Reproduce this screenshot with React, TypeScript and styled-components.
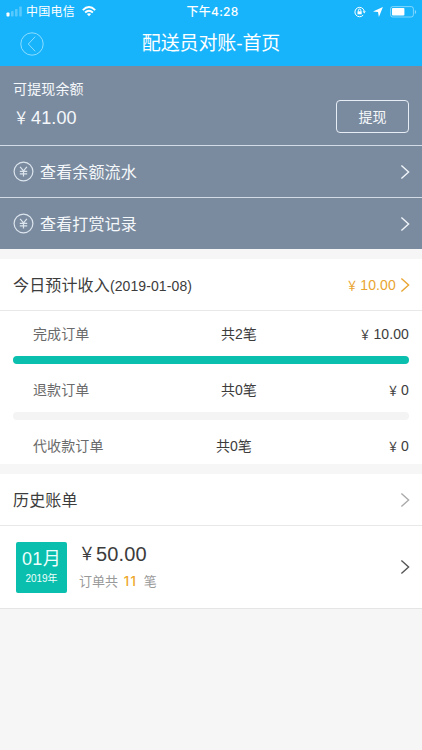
import React from 'react';
import styled, { createGlobalStyle } from 'styled-components';

const GlobalStyle = createGlobalStyle`
  * { box-sizing: border-box; }
  body {
    margin: 0;
    background: #f6f6f6;
    font-family: "Liberation Sans", "Noto Sans CJK SC", sans-serif;
    color: #3c3c3c;
  }
`;

const Page = styled.main`
  width: 422px;
  height: 750px;
  overflow: hidden;
  background: #f6f6f6;
`;

const Header = styled.header`
  height: 66px;
  background: #18b4fb;
  color: #fff;
`;

const StatusBar = styled.div`
  display: grid;
  grid-template-columns: 1fr auto 1fr;
  align-items: center;
  height: 22px;
  padding: 0 5px 0 6px;
  font-size: 12px;
  line-height: 22px;
`;

const StatusGroup = styled.div<{ $end?: boolean }>`
  display: flex;
  align-items: center;
  justify-content: ${(p) => (p.$end ? 'flex-end' : 'flex-start')};
`;

const Carrier = styled.span`
  margin: 0 7px 0 3px;
  padding-top: 1px;
  letter-spacing: 0.25px;
`;

const Clock = styled.span`
  margin-left: 2px;
  padding-top: 1px;
  font-family: Inter, "Noto Sans CJK SC", sans-serif;
  font-weight: 500;
  font-size: 12px;
  letter-spacing: 0.25px;
`;

const TitleBar = styled.div`
  display: grid;
  grid-template-columns: 24px 1fr 24px;
  align-items: center;
  height: 43px;
  padding: 0 20px;
`;

const Title = styled.h1`
  margin: 0;
  font-size: 19px;
  font-weight: 400;
  line-height: 43px;
  letter-spacing: -0.1px;
  text-align: center;
`;

const Balance = styled.section`
  background: #7b8b9f;
  color: #f5f8fb;
`;

const BalanceTop = styled.div`
  display: flex;
  justify-content: space-between;
  height: 79px;
  padding: 12px 13px 0;
`;

const BalanceLabel = styled.div`
  font-size: 14px;
  line-height: 22px;
  letter-spacing: 0.15px;
`;

const BalanceAmount = styled.div`
  padding-top: 2px;
  font-size: 18px;
  line-height: 32px;
  letter-spacing: 0.1px;
`;

const WithdrawButton = styled.button`
  width: 73px;
  height: 33px;
  margin-top: 22px;
  padding: 0 0 2px;
  border: 1px solid #e6edf5;
  border-radius: 4px;
  background: transparent;
  color: inherit;
  font: 14px/28px "Noto Sans CJK SC", sans-serif;
`;

const LinkRow = styled.div`
  display: flex;
  align-items: center;
  height: 52px;
  padding: 0 12px 0 13px;
  border-top: 1px solid #d3dce6;
  font-size: 16px;
  letter-spacing: 0.15px;

  span { flex: 1; margin-left: 6px; padding-bottom: 2px; }
`;

const Panel = styled.section`
  margin-top: 10px;
  background: #fff;
`;

const PanelHead = styled.div`
  display: flex;
  align-items: center;
  height: 52px;
  padding: 0 12px 0 13px;
  border-bottom: 1px solid #e8e8e8;
`;

const PanelTitle = styled.h2`
  flex: 1;
  margin: 0;
  padding-bottom: 2px;
  font-size: 16px;
  font-weight: 400;
  letter-spacing: 0.15px;

  small { font-size: 14px; letter-spacing: 0.1px; }
`;

const Income = styled.span`
  margin-right: 4px;
  padding-bottom: 2px;
  color: #e9a531;
  font-size: 14px;
  letter-spacing: 0.15px;
`;

const YenSign = styled.span<{ $pull?: number }>`
  display: inline-block;
  margin-left: -1px;
  margin-right: ${(p) => 1 - (p.$pull || 0)}px;
  transform: scale(0.82, 0.92);
`;

const OrderItem = styled.div<{ $height: number }>`
  height: ${(p) => p.$height}px;
  padding: 0 13px;
`;

const OrderLine = styled.div<{ $lead: number }>`
  display: grid;
  grid-template-columns: ${(p) => p.$lead}px 1fr auto;
  height: 44px;
  padding-left: 20px;
  font-size: 14px;
  line-height: 47px;
`;

const OrderName = styled.span`
  color: #6a6a6a;
  letter-spacing: 0.1px;
`;

const OrderAmount = styled.span`
  letter-spacing: 0.1px;
`;

const Bar = styled.div<{ $filled?: boolean }>`
  height: 8px;
  margin-top: 1px;
  border-radius: 4px;
  background: ${(p) => (p.$filled ? '#0abfad' : '#f4f4f4')};
`;

const Bill = styled.div`
  display: flex;
  align-items: center;
  height: 83px;
  padding: 0 12px 0 16px;
  border-bottom: 1px solid #e5e5e5;
`;

const DateTile = styled.div`
  width: 51px;
  height: 51px;
  padding-top: 5px;
  border-radius: 2px;
  background: #0abfad;
  color: #effffd;
  text-align: center;
`;

const Month = styled.div`
  font-size: 18px;
  line-height: 24px;
  letter-spacing: 0.3px;
`;

const Year = styled.div`
  font-size: 10px;
  line-height: 15px;
`;

const BillInfo = styled.div`
  flex: 1;
  margin-left: 12px;
`;

const BillAmount = styled.div`
  margin-left: -1px;
  font-size: 20px;
  line-height: 28px;
  letter-spacing: 0.1px;
`;

const BillCount = styled.div`
  color: #999;
  font-size: 13px;
  line-height: 26px;

  b {
    margin: 0 3px 0 2px;
    color: #eda628;
    font-family: Inter, sans-serif;
    font-weight: 500;
    letter-spacing: 1.4px;
  }
`;

const Chevron = ({ color }: { color: string }) => (
  <svg width="10" height="16" viewBox="0 0 10 16" fill="none" stroke={color} strokeWidth="1.4">
    <path d="M1.4 1.4 8.6 8 1.4 14.6" />
  </svg>
);

const Yen = () => (
  <svg width="21" height="21" viewBox="0 0 21 21" fill="none" stroke="#dce5ee" strokeWidth="1.2">
    <circle cx="10.5" cy="10.5" r="9.4" />
    <path d="m7.1 5.8 3.4 4 3.4-4M10.5 9.8v5.8M6.8 10.3h7.4M6.8 12.9h7.4" />
  </svg>
);

const Signal = () => (
  <svg width="17" height="11" viewBox="0 0 17 11" fill="#fff">
    <rect x="0.5" y="6.5" width="3" height="4" rx="0.8" />
    <g opacity="0.28">
      <rect x="5" y="5" width="2.6" height="5.5" rx="0.7" />
      <rect x="9" y="3" width="2.6" height="7.5" rx="0.7" />
      <rect x="13.2" y="0.5" width="2.6" height="10" rx="0.7" />
    </g>
  </svg>
);

const Wifi = () => (
  <svg width="14" height="11" viewBox="0 0 14 11" fill="none" stroke="#fff" strokeWidth="1.9">
    <path d="M.8 4.1Q7-1.9 13.2 4.1M3.1 6.5Q7 2.9 10.9 6.5" />
    <path d="M4.9 8.1Q7 6.4 9.1 8.1L7 10.3Z" fill="#fff" stroke="none" />
  </svg>
);

const Lock = () => (
  <svg width="12" height="12" viewBox="0 0 12 12" fill="none" stroke="#fff" strokeWidth="1">
    <path d="M9.2 9.1A4.7 4.7 0 1 1 10.2 5" />
    <path d="M8.7 5.2h3.1L10.2 7.4Z" fill="#fff" stroke="none" />
    <rect x="3.5" y="5.3" width="4.2" height="3" fill="#fff" stroke="none" />
    <path d="M4.4 5.5V4.3a1.2 1.2 0 0 1 2.4 0v1.2" />
  </svg>
);

const Arrow = () => (
  <svg width="10" height="10" viewBox="0 0 10 10" fill="#fff">
    <path d="M9.9.1 5.9 9.9 5 5.1 0 4.6Z" />
  </svg>
);

const Battery = () => (
  <svg width="27" height="12" viewBox="0 0 27 12" fill="none">
    <rect x=".6" y=".6" width="22.8" height="10.4" rx="2.2" stroke="#fff" strokeOpacity=".45" />
    <rect x="2" y="2" width="12.4" height="7.6" rx=".8" fill="#fff" />
    <path d="M24.9 4v4q1.2-.5 1.2-2t-1.2-2Z" fill="#fff" opacity=".5" />
  </svg>
);

const StatusIcons = styled.div`
  display: flex;
  align-items: center;
  gap: 7px;
`;

const Back = () => (
  <svg width="24" height="24" viewBox="0 0 24 24" fill="none" stroke="#8bdcff" strokeWidth="1">
    <circle cx="12" cy="12" r="11.2" />
    <path d="M15.2 4.7 8.3 12l6.9 7.3" />
  </svg>
);

const orders = [
  { name: '完成订单', count: '共2笔', amount: '10.00', filled: true },
  { name: '退款订单', count: '共0笔', amount: '0' },
  { name: '代收款订单', count: '共0笔', amount: '0', last: true },
];

export default function App() {
  return (
    <Page>
      <GlobalStyle />
      <Header>
        <StatusBar>
          <StatusGroup>
            <Signal />
            <Carrier>中国电信</Carrier>
            <Wifi />
          </StatusGroup>
          <Clock>下午4:28</Clock>
          <StatusGroup $end>
            <StatusIcons>
              <Lock />
              <Arrow />
              <Battery />
            </StatusIcons>
          </StatusGroup>
        </StatusBar>
        <TitleBar>
          <Back />
          <Title>配送员对账-首页</Title>
        </TitleBar>
      </Header>

      <Balance>
        <BalanceTop>
          <div>
            <BalanceLabel>可提现余额</BalanceLabel>
            <BalanceAmount>
              <YenSign>￥</YenSign>41.00
            </BalanceAmount>
          </div>
          <WithdrawButton>提现</WithdrawButton>
        </BalanceTop>
        {['查看余额流水', '查看打赏记录'].map((label) => (
          <LinkRow key={label}>
            <Yen />
            <span>{label}</span>
            <Chevron color="#f0f5fa" />
          </LinkRow>
        ))}
      </Balance>

      <Panel>
        <PanelHead>
          <PanelTitle>
            今日预计收入<small>(2019-01-08)</small>
          </PanelTitle>
          <Income>
            <YenSign>￥</YenSign>10.00
          </Income>
          <Chevron color="#e9a531" />
        </PanelHead>
        {orders.map((o) => (
          <OrderItem key={o.name} $height={o.last ? 41 : 56}>
            <OrderLine $lead={o.last ? 183 : 188}>
              <OrderName>{o.name}</OrderName>
              <span>{o.count}</span>
              <OrderAmount>
                <YenSign>￥</YenSign>
                {o.amount}
              </OrderAmount>
            </OrderLine>
            {!o.last && <Bar $filled={o.filled} />}
          </OrderItem>
        ))}
      </Panel>

      <Panel>
        <PanelHead>
          <PanelTitle>历史账单</PanelTitle>
          <Chevron color="#aaa" />
        </PanelHead>
        <Bill>
          <DateTile>
            <Month>01月</Month>
            <Year>2019年</Year>
          </DateTile>
          <BillInfo>
            <BillAmount>
              <YenSign $pull={2}>￥</YenSign>50.00
            </BillAmount>
            <BillCount>
              订单共 <b>11</b> 笔
            </BillCount>
          </BillInfo>
          <Chevron color="#555" />
        </Bill>
      </Panel>
    </Page>
  );
}
